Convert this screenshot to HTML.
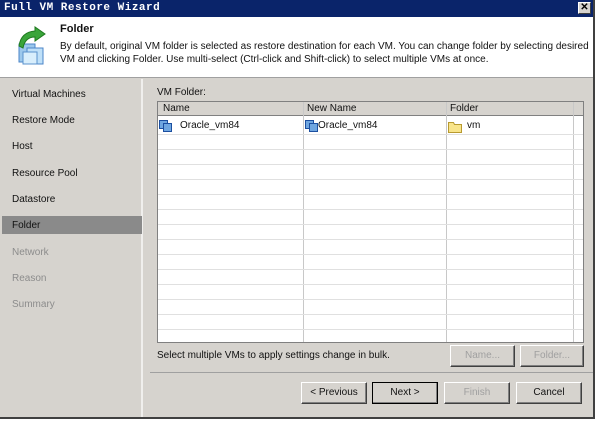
<!DOCTYPE html><html><head><style>
*{margin:0;padding:0;box-sizing:border-box}
body{width:601px;height:422px;background:#fff;font-family:"Liberation Sans",Tahoma,sans-serif;font-size:10.5px;color:#111;position:relative;overflow:hidden}
.a{position:absolute}
.win{left:0;top:0;width:595px;height:419px;background:#d6d3ce;border-right:2px solid #404040;border-bottom:2px solid #404040}
.title{left:0;top:0;width:593px;height:17px;background:#0a246a;color:#fff;font-family:"Liberation Mono",monospace;font-weight:bold;font-size:11px;padding:2px 4px;letter-spacing:.5px}
.x{left:578px;top:2px;width:13px;height:12px;background:#d6d3ce;border:1px solid #fff;border-right-color:#404040;border-bottom-color:#404040;color:#000;font-size:10px;font-weight:bold;text-align:center;line-height:10px;font-family:"Liberation Sans",sans-serif}
.hdr{left:0;top:17px;width:593px;height:61px;background:#fff;border-bottom:1px solid #a0a0a0}
.nav{left:0;top:79px;width:143px;height:338px;background:#d6d3ce;border-right:2px solid #f0efed}
.ni{position:absolute;left:12px;font-size:10px}
.grid{left:157px;top:101px;width:427px;height:242px;background:#fff;border:1px solid #808080}
.btn{position:absolute;height:22px;border:1px solid #fff;border-right-color:#404040;border-bottom-color:#404040;background:#d6d3ce;text-align:center;line-height:20px;font-size:10px;box-shadow:inset -1px -1px 0 #808080}
.dis{color:#a0a0a0}
</style></head><body>
<div class="a win"></div>
<div class="a title">Full VM Restore Wizard</div>
<div class="a x">✕</div>
<div class="a hdr">
 <svg class="a" style="left:13px;top:9px" width="40" height="42" viewBox="0 0 40 42">
  <rect x="6" y="18" width="16" height="18" fill="#9cc8ec" stroke="#4b86c8"/>
  <rect x="14" y="22" width="16" height="16" fill="#bfe0f8" stroke="#4b86c8"/>
  <rect x="10" y="26" width="14" height="12" fill="#d8eefc" stroke="#5a92cc"/>
  <path d="M6 20 Q8 6 22 5 L22 1 L32 8 L22 15 L22 11 Q12 11 10 22Z" fill="#3aa53a" stroke="#1f7a1f"/>
 </svg>
 <div class="a" style="left:60px;top:6px;font-weight:bold;font-size:11px">Folder</div>
 <div class="a" style="left:60px;top:23px;font-size:10px;line-height:13px;width:535px">By default, original VM folder is selected as restore destination for each VM. You can change folder by selecting desired VM and clicking Folder. Use multi-select (Ctrl-click and Shift-click) to select multiple VMs at once.</div>
</div>
<div class="a nav">
 <div class="ni" style="top:10px">Virtual Machines</div>
 <div class="ni" style="top:36px">Restore Mode</div>
 <div class="ni" style="top:62px">Host</div>
 <div class="ni" style="top:89px">Resource Pool</div>
 <div class="ni" style="top:115px">Datastore</div>
 <div class="a" style="left:2px;top:137px;width:140px;height:18px;background:#8a8a8a"></div>
 <div class="ni" style="top:141px">Folder</div>
 <div class="ni dis" style="top:168px;color:#8c8c8c">Network</div>
 <div class="ni dis" style="top:194px;color:#8c8c8c">Reason</div>
 <div class="ni dis" style="top:220px;color:#8c8c8c">Summary</div>
</div>
<div class="a" style="left:157px;top:87px;font-size:10px">VM Folder:</div>
<div class="a grid">
 <div class="a" style="left:0;top:0;width:425px;height:14px;background:#d6d3ce;border-bottom:1px solid #808080"></div>
 <div class="a" style="left:5px;top:1px;font-size:10px">Name</div>
 <div class="a" style="left:149px;top:1px;font-size:10px">New Name</div>
 <div class="a" style="left:292px;top:1px;font-size:10px">Folder</div>
 <svg class="a" style="left:0;top:0" width="425" height="240">
  <g stroke="#c8c8c8" stroke-width="1">
   <line x1="145.5" y1="0" x2="145.5" y2="240"/><line x1="288.5" y1="0" x2="288.5" y2="240"/><line x1="415.5" y1="0" x2="415.5" y2="240"/>
  </g>
  <g stroke="#e0e0e0">
   <line x1="0" y1="32.5" x2="425" y2="32.5"/><line x1="0" y1="47.5" x2="425" y2="47.5"/><line x1="0" y1="62.5" x2="425" y2="62.5"/><line x1="0" y1="77.5" x2="425" y2="77.5"/><line x1="0" y1="92.5" x2="425" y2="92.5"/><line x1="0" y1="107.5" x2="425" y2="107.5"/><line x1="0" y1="122.5" x2="425" y2="122.5"/><line x1="0" y1="137.5" x2="425" y2="137.5"/><line x1="0" y1="152.5" x2="425" y2="152.5"/><line x1="0" y1="167.5" x2="425" y2="167.5"/><line x1="0" y1="182.5" x2="425" y2="182.5"/><line x1="0" y1="197.5" x2="425" y2="197.5"/><line x1="0" y1="212.5" x2="425" y2="212.5"/><line x1="0" y1="227.5" x2="425" y2="227.5"/>
  </g>
  <g fill="#6fa6e0" stroke="#1c4fa0">
   <rect x="1.5" y="18.5" width="8" height="8"/><rect x="5.5" y="21.5" width="8" height="8"/>
   <rect x="147.5" y="18.5" width="8" height="8"/><rect x="151.5" y="21.5" width="8" height="8"/>
  </g>
  <path d="M290.5 20.5h5l1 2h7v8h-13z" fill="#f8e48a" stroke="#b89a30"/>
 </svg>
 <div class="a" style="left:22px;top:18px;font-size:10px">Oracle_vm84</div>
 <div class="a" style="left:160px;top:18px;font-size:10px">Oracle_vm84</div>
 <div class="a" style="left:309px;top:18px;font-size:10px">vm</div>
</div>
<div class="a" style="left:157px;top:350px;font-size:10px">Select multiple VMs to apply settings change in bulk.</div>
<div class="btn dis" style="left:450px;top:345px;width:65px">Name...</div>
<div class="btn dis" style="left:520px;top:345px;width:64px">Folder...</div>
<div class="a" style="left:150px;top:372px;width:443px;height:1px;background:#f4f4f4;border-top:1px solid #a0a0a0"></div>
<div class="btn" style="left:301px;top:382px;width:66px">&lt; Previous</div>
<div class="btn" style="left:372px;top:382px;width:66px;border:1px solid #000">Next &gt;</div>
<div class="btn dis" style="left:444px;top:382px;width:66px">Finish</div>
<div class="btn" style="left:516px;top:382px;width:66px">Cancel</div>
</body></html>
